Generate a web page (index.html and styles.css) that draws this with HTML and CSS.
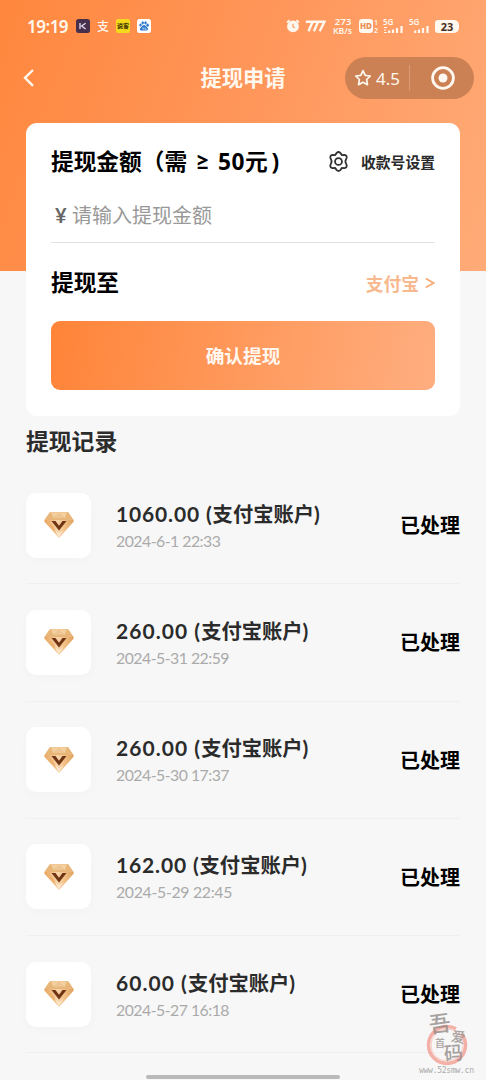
FILE: index.html
```html
<!DOCTYPE html>
<html lang="zh-CN">
<head>
<meta charset="utf-8">
<title>提现申请</title>
<link rel="stylesheet" href="styles.css">
</head>
<body>
<svg class="defs" width="0" height="0">
  <defs>
    <linearGradient id="gem-base" x1="0" y1="0" x2="1" y2="0"><stop offset="0" stop-color="#e8a35c"/><stop offset=".45" stop-color="#f8d5ab"/><stop offset=".65" stop-color="#f3c48c"/><stop offset="1" stop-color="#dfa05a"/></linearGradient>
    <symbol id="gem" viewBox="0 0 30 26">
      <path d="M7 0h16q1 0 1.600.8L29.500 8q.6 1-.2 2L16 25q-1 1-2 0L.7 10Q0 9 .5 8L5.400.8Q6 0 7 0z" fill="url(#gem-base)"/>
      <path d="M6 .5h18L29 8H1z" fill="#e9b679"/>
      <path d="M7 .5h16l-2.500 5.500h-11z" fill="#f3d0a0"/>
      <path d="M9 6l6-5.500L21 6z" fill="#ecc592"/>
      <path d="M1.500 9.500L9 14l4.500 9z" fill="#edb06b"/>
      <path d="M10.500 18L15 25l4.500-7-4.500 3z" fill="#fce5cb"/>
      <path d="M7.500 9h4l3.500 4.800L18.500 9h4L15 18.600z" fill="#6f3413"/>
    </symbol>
  </defs>
</svg>
<div class="page">
  <header class="hero">
    <div class="status">
      <span class="clock">19:19</span>
      <svg class="app" viewBox="0 0 14 14"><rect width="14" height="14" rx="2.5" fill="#47304b"/><path d="M4 4v6M9.600 4.200L5.600 7l4 3" fill="none" stroke="#e5ddf0" stroke-width="1.300"/></svg>
      <span class="zhi">支</span>
      <span class="yellow">说客</span>
      <svg class="app baidu" viewBox="0 0 14 14"><rect width="14" height="14" rx="2.500" fill="#fff"/><g fill="#2d77cf"><ellipse cx="3.500" cy="6" rx="1.200" ry="1.600"/><ellipse cx="5.700" cy="3.800" rx="1.200" ry="1.600"/><ellipse cx="8.500" cy="3.800" rx="1.200" ry="1.600"/><ellipse cx="10.600" cy="6.200" rx="1.200" ry="1.600"/><path d="M7 6c1.500 0 2 1.600 3.400 2.800 1.300 1.500.4 3-1.200 2.800H4.800C3 11.700 2.300 10.200 3.600 8.800 5 7.600 5.500 6 7 6z"/></g><path d="M5 9h1.500v1.500M8 8.500v2h1.500" fill="none" stroke="#fff" stroke-width=".6"/></svg>
      <span class="grow"></span>
      <svg class="alarm" viewBox="0 0 14 14"><circle cx="7" cy="7.400" r="5.900" fill="#fff8ee"/><path d="M1 3.500l2.600-2.300M13 3.500l-2.600-2.300" stroke="#fff8ee" stroke-width="1.800"/><path d="M7 4.800v3l2 1" fill="none" stroke="#ff9c60" stroke-width="1.200"/></svg>
      <svg class="sevens" viewBox="0 0 20 11"><path d="M.8 1.500h6.500L3.300 10.500M7.500 1.500h5L8.500 10.500M12.700 1.500h5.800L14 10.500" fill="none" stroke="#fff8ee" stroke-width="2.300"/></svg>
      <svg class="speed" viewBox="0 0 20 18"><text x="1.500" y="8" font-size="9.500" textLength="17" lengthAdjust="spacingAndGlyphs">273</text><text x="0" y="16.500" font-size="8" textLength="19" lengthAdjust="spacingAndGlyphs">KB/s</text></svg>
      <span class="hd">HD</span>
      <svg class="sim" viewBox="0 0 6 14"><text x="1" y="6">1</text><text x="1" y="13.500">2</text></svg>
      <svg class="signal first" viewBox="0 0 21 15"><text x="0" y="6">5G</text><path d="M1 8.500h3M1 11h2M1 13.500h3" class="bars thin"/><path d="M6.200 14v-2.500M10 14v-3.500M14 14V9M18.500 14V7" class="bars"/></svg>
      <svg class="signal" viewBox="0 0 21 15"><text x="0" y="6">5G</text><path d="M6.200 14v-2.500M10 14v-3.500M14 14V9M18.500 14V7" class="bars"/></svg>
      <span class="battery">23</span>
    </div>
    <nav class="nav">
      <svg class="back" viewBox="0 0 12 20"><path d="M10 2L2 9.800 10 17.800" fill="none" stroke="#fff8ee" stroke-width="2.400"/></svg>
      <h1>提现申请</h1>
      <div class="capsule">
        <svg class="star" viewBox="0 0 18 18"><path d="M9 1.600l2.200 4.700 5.100.7-3.700 3.500.9 5.200L9 13.200l-4.500 2.500.9-5.200L1.700 7l5.100-.7z" fill="none" stroke="#fff8f0" stroke-width="1.700" stroke-linejoin="round"/></svg>
        <span class="score">4.5</span>
        <span class="split"></span>
        <svg class="target" viewBox="0 0 24 24"><circle cx="12" cy="12" r="10.400" fill="none" stroke="#fff8f0" stroke-width="2.800"/><circle cx="12" cy="12" r="4.500" fill="#fff8f0"/></svg>
      </div>
    </nav>
  </header>

  <main>
    <section class="card">
      <div class="row amount">
        <h2>提现金额<span class="open">（</span>需 <span class="gte">≥</span> <span class="min">50</span>元<span class="close">)</span></h2>
        <div class="setting">
          <svg class="gear" viewBox="0 0 20 20"><path d="M8.300 1.800Q10 .2 11.700 1.800L13.300 3.900 15.900 3.700Q18.100 4.200 17.800 6.400L16.700 9.100Q16.500 10 16.700 10.900L17.800 13.600Q18.100 15.800 15.900 16.300L13.300 16.100 11.700 18.200Q10 19.800 8.300 18.200L6.700 16.100 4.100 16.300Q1.900 15.800 2.200 13.600L3.300 10.900Q3.500 10 3.300 9.100L2.200 6.400Q1.900 4.200 4.100 3.700L6.700 3.900z"/><circle cx="10" cy="10" r="3.300"/></svg>
          <span>收款号设置</span>
        </div>
      </div>
      <div class="field"><span class="yen">¥</span><span class="hint">请输入提现金额</span></div>
      <div class="row target-row"><h2>提现至</h2><span class="method">支付宝<svg class="chevron" viewBox="0 0 10 12"><path d="M.8 1.500L8.500 6 .8 10.500"/></svg></span></div>
      <div class="submit">确认提现</div>
    </section>

    <h3>提现记录</h3>
    <ul class="records">
      <li><span class="tile"><svg><use href="#gem"/></svg></span><div class="info"><p class="sum"><span>1060.00 (</span>支付宝账户<span>)</span></p><p class="date">2024-6-1 22:33</p></div><span class="state">已处理</span></li>
      <li><span class="tile"><svg><use href="#gem"/></svg></span><div class="info"><p class="sum wide"><span>260.00 (</span>支付宝账户<span>)</span></p><p class="date">2024-5-31 22:59</p></div><span class="state">已处理</span></li>
      <li><span class="tile"><svg><use href="#gem"/></svg></span><div class="info"><p class="sum wide"><span>260.00 (</span>支付宝账户<span>)</span></p><p class="date">2024-5-30 17:37</p></div><span class="state">已处理</span></li>
      <li><span class="tile"><svg><use href="#gem"/></svg></span><div class="info"><p class="sum"><span>162.00 (</span>支付宝账户<span>)</span></p><p class="date loose">2024-5-29 22:45</p></div><span class="state">已处理</span></li>
      <li><span class="tile"><svg><use href="#gem"/></svg></span><div class="info"><p class="sum wide"><span>60.00 (</span>支付宝账户<span>)</span></p><p class="date">2024-5-27 16:18</p></div><span class="state">已处理</span></li>
    </ul>
  </main>
  <div class="home-bar"></div>
  <svg class="watermark" viewBox="0 0 70 70">
    <circle cx="35" cy="35" r="18.500" fill="none" stroke="#f3b0a7" stroke-width="3.500" stroke-dasharray="96 8"/>
    <circle cx="35" cy="35" r="16" fill="none" stroke="#f7cdc6" stroke-width="1"/>
    <g class="brush"><text x="17" y="22" font-size="22" transform="rotate(-8 27 15)">吾</text><text x="23" y="37" font-size="10">首</text><text x="39" y="32" font-size="14" transform="rotate(10 46 28)">爱</text><text x="32" y="50" font-size="19" transform="rotate(-5 42 44)">码</text></g>
    <text class="url" x="7" y="63" textLength="55">www.52smw.cn</text>
  </svg>
</div>
</body>
</html>
```

FILE: styles.css
```css
* { box-sizing: border-box; }
body { margin: 0; font-family: Lato, "Noto Sans CJK SC", sans-serif; color: #000; }
h1, h2, h3, p, ul { margin: 0; padding: 0; }
.defs { position: absolute; }
.page { position: relative; width: 486px; height: 1080px; overflow: hidden; background: #f7f7f7; }

/* Orange header */
.hero { height: 271px; background: linear-gradient(110deg, #ff873d 0%, #ff965a 48%, #ffab78 100%); color: #fff8ee; }
.status { display: flex; align-items: center; height: 52px; padding: 0 27px 0 27px; }
.clock { width: 49px; font: 600 17px "Noto Sans", sans-serif; white-space: nowrap; letter-spacing: -.5px; }
.app { width: 14px; height: 14px; }
.zhi { width: 12px; margin: 0 7px 0 7px; font: 500 12px/14px "Noto Sans CJK SC", sans-serif; }
.yellow { width: 14px; height: 14px; margin-right: 7px; border-radius: 2px; background: #f5d91d; color: #4e4300; font: 900 6px/13px "Noto Sans CJK SC", sans-serif; text-align: center; white-space: nowrap; }
.grow { flex: 1; }
.alarm { width: 14px; height: 14px; margin-right: 5px; }
.sevens { width: 21px; height: 12px; margin-right: 7px; }
.speed { width: 20px; height: 18px; margin-right: 6px; overflow: visible; }
.speed text, .sim text, .signal text { font-family: "Noto Sans", sans-serif; font-weight: 600; fill: #fff8ee; }
.hd { width: 14px; height: 14px; border-radius: 3px; background: #fff8ee; color: #e98c52; font: 800 8px/14px "Noto Sans", sans-serif; text-align: center; }
.sim { width: 6px; height: 14px; margin-right: 4px; overflow: visible; }
.sim text { font-size: 7px; }
.signal { width: 21px; height: 15px; overflow: visible; }
.signal.first { margin-right: 5px; }
.signal text { font-size: 8px; }
.bars { stroke: #fff8ee; stroke-width: 2.200; fill: none; }
.bars.thin { stroke-width: 1.200; }
.battery { width: 24px; height: 13px; margin-left: 5px; border-radius: 3px 5px 5px 3px; background: #fff8ee; color: #4a2f22; font: 700 11px/13px "Noto Sans", sans-serif; text-align: center; }
.nav { display: grid; grid-template-columns: 129px 1fr 129px; align-items: center; height: 52px; padding: 0 12px; }
.back { width: 12px; height: 20px; margin-left: 11px; }
h1 { text-align: center; font-size: 21.300px; line-height: 30px; font-weight: 700; }
.capsule { display: flex; align-items: center; height: 42px; border-radius: 21px; background: #cb8153; padding-left: 9px; }
.star { width: 18px; height: 18px; }
.score { width: 25px; margin-left: 4px; font: 400 17px "Noto Sans", sans-serif; }
.split { width: 1px; height: 26px; margin: 0 21px 0 8px; background: #d99972; }
.target { width: 24px; height: 24px; }

/* Withdrawal form */
.card { height: 293px; margin: -148px 26px 0; padding: 0 25px; border-radius: 11px; background: #fff; }
.row { display: flex; align-items: center; justify-content: space-between; }
.amount { height: 77px; }
h2 { font-family: "Noto Sans", "Noto Sans CJK SC", sans-serif; font-size: 22.700px; line-height: 30px; font-weight: 700; white-space: nowrap; }
.gte { display: inline-block; width: 19px; font-family: Lato, sans-serif; font-size: 25px; line-height: 20px; text-align: center; }
.min { letter-spacing: .5px; }
.close { margin-left: 4px; }
.setting { display: flex; align-items: center; gap: 12px; font-size: 14.800px; font-weight: 700; color: #2a2a2a; }
.gear { width: 21px; height: 21px; fill: none; stroke: #333; stroke-width: 1.700; stroke-linejoin: round; }
.field { display: flex; align-items: center; height: 43px; padding: 0 0 12px 4px; border-bottom: 1px solid #e2e2e2; margin-bottom: 1px; font-size: 20px; line-height: 30px; }
.yen { width: 17px; color: #666; font-weight: 700; }
.hint { color: #999; font-weight: 400; }
.target-row { height: 77px; }
.method { display: flex; align-items: center; gap: 6px; font-size: 17.800px; font-weight: 700; color: #f7b98d; }
.chevron { width: 10px; height: 12px; fill: none; stroke: #f5ad7b; stroke-width: 2; }
.submit { height: 69px; border-radius: 9px; background: linear-gradient(100deg, #ff8438, #ffae80); color: #fff8f0; font-size: 18.700px; line-height: 71px; font-weight: 700; text-align: center; }

/* Withdrawal history */
h3 { height: 51px; padding: 10px 26px 0; color: #2c2c2c; font-size: 22.800px; line-height: 30px; font-weight: 700; }
.records { list-style: none; padding: 0 26px; }
.records li { display: flex; align-items: center; height: 117.250px; border-bottom: 1px solid #f0f0f0; }
.tile { display: flex; align-items: center; justify-content: center; width: 65px; height: 65px; margin-right: 25px; border-radius: 10px; background: #fff; box-shadow: 0 3px 12px #00000005; }
.tile svg { width: 30px; height: 26px; }
.info { flex: 1; padding-top: 2px; }
.sum { font-size: 20.300px; line-height: 28px; font-weight: 700; color: #2b2b2b; white-space: nowrap; }
.sum span { font-size: 21px; letter-spacing: .85px; }
.sum.wide span { letter-spacing: 1.050px; }
.date { font-size: 15.800px; line-height: 25px; letter-spacing: -.5px; color: #aaa; white-space: nowrap; }
.date.loose { letter-spacing: -.3px; }
.state { font-size: 20px; line-height: 28px; font-weight: 700; }

.home-bar { position: absolute; left: 146px; top: 1075px; width: 194px; height: 4px; border-radius: 2px; background: #bababa; }
.watermark { position: absolute; left: 412px; top: 1010px; width: 70px; height: 70px; overflow: visible; }
.brush { fill: #8d8583; font-family: "Noto Sans CJK SC", sans-serif; font-weight: 500; opacity: .75; }
.url { font: 8px "DejaVu Sans Mono", monospace; fill: #aaa; }
```
